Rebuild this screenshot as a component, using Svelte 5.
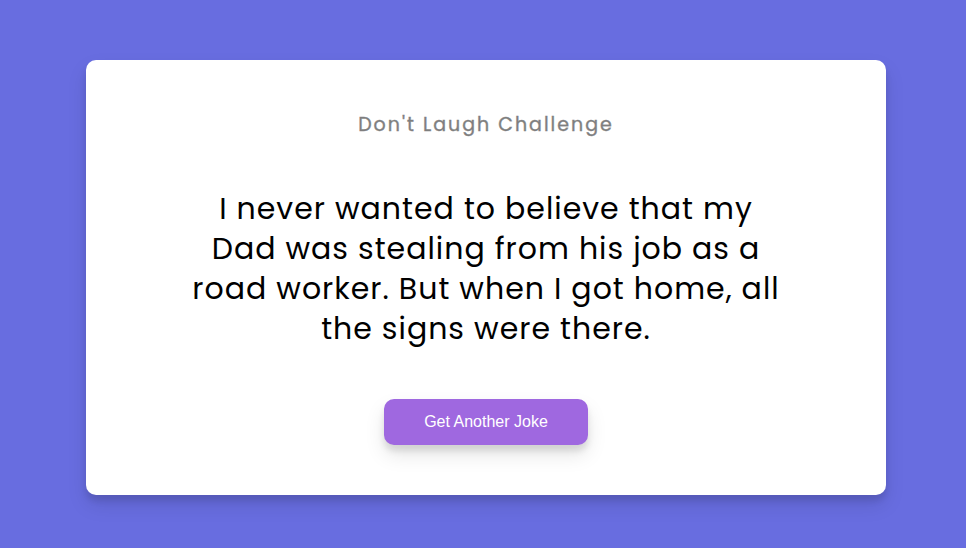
<script>
  const jokes = [
    'I never wanted to believe that my Dad was stealing from his job as a road worker. But when I got home, all the signs were there.',
    'Why did the scarecrow win an award? He was outstanding in his field.',
    'I used to be addicted to the hokey pokey, but I turned myself around.'
  ];
  let index = $state(0);
  const next = () => (index = (index + 1) % jokes.length);
</script>

<main>
  <section class="card">
    <h3>Don't Laugh Challenge</h3>
    <p class="joke">{jokes[index]}</p>
    <button type="button" onclick={next}>Get Another Joke</button>
  </section>
</main>

<style>
  :global(*) {
    box-sizing: border-box;
  }
  :global(body) {
    margin: 0;
    background: #686de0;
  }
  main {
    display: flex;
    align-items: center;
    justify-content: center;
    min-height: 100vh;
    padding: 20px 16px 14px 22px;
    font-family: Poppins, Inter, 'Open Sans', sans-serif;
  }
  .card,
  button {
    border-radius: 10px;
    box-shadow: 0 10px 20px rgba(0, 0, 0, 0.1), 0 6px 6px rgba(0, 0, 0, 0.1);
  }
  .card {
    width: 800px;
    max-width: 100%;
    padding: 50px 20px;
    background: #fff;
    text-align: center;
  }
  h3 {
    margin: 0;
    font-size: 19px;
    line-height: 30px;
    font-weight: 400;
    letter-spacing: 2px;
    color: #000;
    opacity: 0.5;
    -webkit-text-stroke: 0.4px #000;
  }
  .joke {
    max-width: 600px;
    margin: 49px auto 50px;
    font-size: 30px;
    line-height: 40px;
    letter-spacing: 1px;
    color: #000;
  }
  button {
    padding: 14px 40px;
    border: 0;
    background: #9f68e0;
    color: #fff;
    font-family: 'Liberation Sans', Arial, sans-serif;
    font-size: 16px;
    line-height: 18px;
    cursor: pointer;
  }
  button:active {
    transform: scale(0.98);
  }
</style>
